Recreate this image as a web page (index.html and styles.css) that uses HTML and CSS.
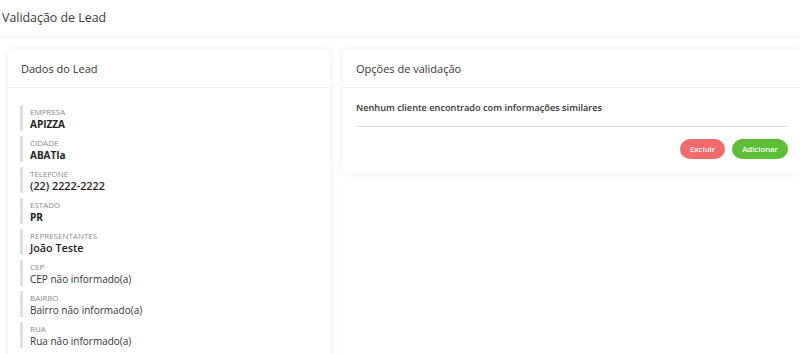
FILE: index.html
```html
<!DOCTYPE html>
<html lang="pt-BR">
<head>
  <meta charset="UTF-8" />
  <meta name="viewport" content="width=device-width, initial-scale=1" />
  <title>Validação de Lead</title>
  <link rel="stylesheet" href="styles.css">
</head>
<body>

<h1 class="page-title">Validação de Lead</h1>

<div class="content">
  <div class="card card-left">
    <div class="card-header">Dados do Lead</div>
    <div class="card-body lead-data">
      <div class="field">
        <span class="field-label">Empresa</span>
        <span class="field-value strong">APIZZA</span>
      </div>
      <div class="field">
        <span class="field-label">Cidade</span>
        <span class="field-value strong">ABATIa</span>
      </div>
      <div class="field">
        <span class="field-label">Telefone</span>
        <span class="field-value big">(22) 2222-2222</span>
      </div>
      <div class="field">
        <span class="field-label">Estado</span>
        <span class="field-value strong">PR</span>
      </div>
      <div class="field">
        <span class="field-label">Representantes</span>
        <span class="field-value big">João Teste</span>
      </div>
      <div class="field">
        <span class="field-label">CEP</span>
        <span class="field-value">CEP não informado(a)</span>
      </div>
      <div class="field">
        <span class="field-label">Bairro</span>
        <span class="field-value">Bairro não informado(a)</span>
      </div>
      <div class="field">
        <span class="field-label">Rua</span>
        <span class="field-value">Rua não informado(a)</span>
      </div>
    </div>
  </div>

  <div class="card card-right">
    <div class="card-header">Opções de validação</div>
    <div class="card-body">
      <p class="empty-msg">Nenhum cliente encontrado com informações similares</p>
      <hr class="divider">
      <div class="actions">
        <button class="btn btn-danger">Excluir</button>
        <button class="btn btn-success">Adicionar</button>
      </div>
    </div>
  </div>
</div>

</body>
</html>
```

FILE: styles.css
```css
body {
  font-family: 'Open Sans', 'Noto Sans', sans-serif;
  background-color: #fff;
  color: #333;
  margin: 0;
  overflow: hidden;
}
.page-title {
  margin: 0;
  padding: 8px 2px 8px;
  font-size: 12.4px;
  font-weight: 400;
  line-height: 19px;
  color: #3a3a3a;
  border-bottom: 3px solid #f7f8fb;
}
.content {
  display: flex;
  align-items: flex-start;
  gap: 13px;
  padding: 12px 8px;
  width: 900px;
}
.card {
  background: white;
  border-radius: 4px;
  box-shadow: 0 0 10px rgba(0,0,0,0.08);
}
.card-left {
  width: 322px;
  flex: none;
}
.card-right {
  width: 458px;
  flex: none;
}
.card-header {
  height: 37px;
  line-height: 37px;
  padding: 0 13px;
  font-size: 11px;
  color: #333;
  border-bottom: 1px solid #f1f1f3;
}
.card-body {
  padding: 13px 13px 14px;
}
.lead-data {
  padding: 17px 12px 10px;
}
.field {
  display: flex;
  flex-direction: column;
  justify-content: center;
  height: 26px;
  margin-bottom: 5px;
  padding-left: 7px;
  border-left: 3px solid #dedede;
}
.field-label {
  font-size: 8px;
  line-height: 11px;
  text-transform: uppercase;
  color: #8a8a8a;
}
.field-value {
  font-size: 10px;
  line-height: 14px;
  color: #333;
}
.field-value.strong {
  font-weight: 700;
  color: #222;
}
.field-value.big {
  font-size: 10.8px;
  font-weight: 600;
  color: #222;
}
.empty-msg {
  margin: 0;
  font-size: 9.2px;
  line-height: 14px;
  font-weight: 600;
  color: #333;
}
.divider {
  margin: 11px 0 12px;
  border: none;
  border-top: 1px solid #e2e2e6;
}
.actions {
  display: flex;
  justify-content: flex-end;
  gap: 7px;
}
.btn {
  height: 20px;
  padding: 0 10px;
  border: none;
  border-radius: 10px;
  font-family: inherit;
  font-size: 7.8px;
  font-weight: 600;
  color: white;
  cursor: pointer;
}
.btn-danger {
  background-color: #f26b6b;
}
.btn-success {
  background-color: #5dbf38;
}
```
